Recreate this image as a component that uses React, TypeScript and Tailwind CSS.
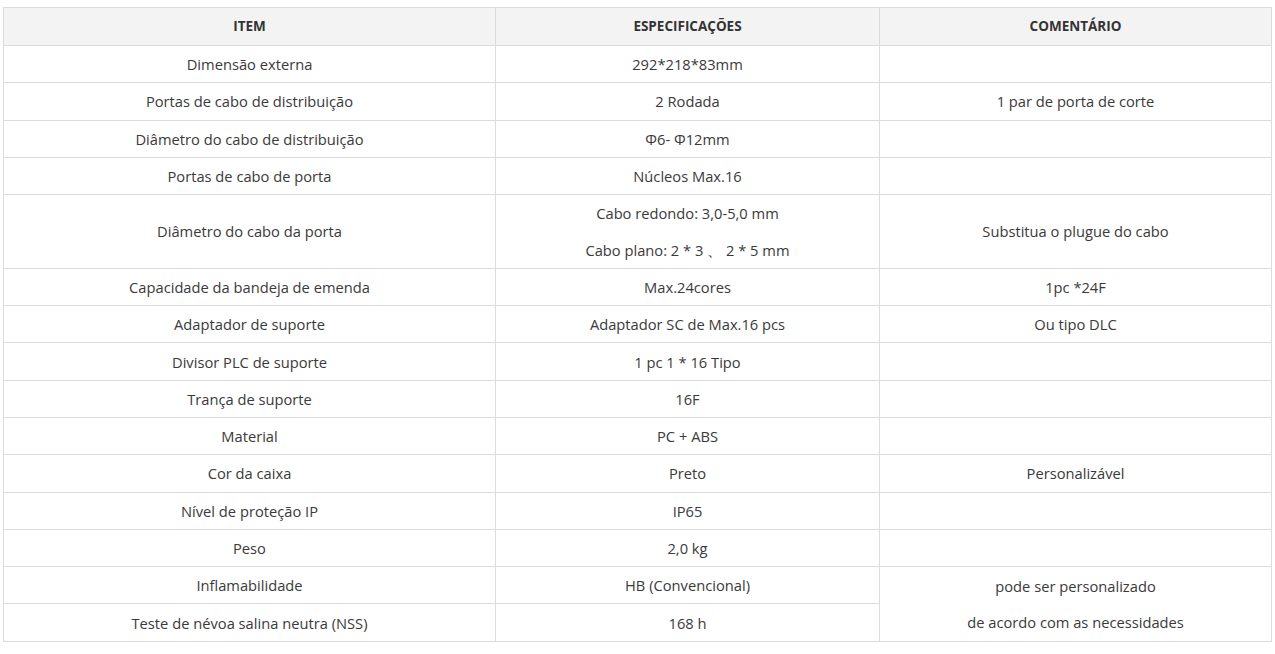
import React from 'react';

interface SpecRow { item: string; spec: string[]; comment?: string[]; span?: number; skip?: boolean; }

const rows: SpecRow[] = [
  { item: 'Dimensão externa', spec: ['292*218*83mm'], comment: [] },
  { item: 'Portas de cabo de distribuição', spec: ['2 Rodada'], comment: ['1 par de porta de corte'] },
  { item: 'Diâmetro do cabo de distribuição', spec: ['Φ6- Φ12mm'], comment: [] },
  { item: 'Portas de cabo de porta', spec: ['Núcleos Max.16'], comment: [] },
  { item: 'Diâmetro do cabo da porta', spec: ['Cabo redondo: 3,0-5,0 mm', 'Cabo plano: 2 * 3 、 2 * 5 mm'], comment: ['Substitua o plugue do cabo'] },
  { item: 'Capacidade da bandeja de emenda', spec: ['Max.24cores'], comment: ['1pc *24F'] },
  { item: 'Adaptador de suporte', spec: ['Adaptador SC de Max.16 pcs'], comment: ['Ou tipo DLC'] },
  { item: 'Divisor PLC de suporte', spec: ['1 pc 1 * 16 Tipo'], comment: [] },
  { item: 'Trança de suporte', spec: ['16F'], comment: [] },
  { item: 'Material', spec: ['PC + ABS'], comment: [] },
  { item: 'Cor da caixa', spec: ['Preto'], comment: ['Personalizável'] },
  { item: 'Nível de proteção IP', spec: ['IP65'], comment: [] },
  { item: 'Peso', spec: ['2,0 kg'], comment: [] },
  { item: 'Inflamabilidade', spec: ['HB (Convencional)'], comment: ['pode ser personalizado', 'de acordo com as necessidades'], span: 2 },
  { item: 'Teste de névoa salina neutra (NSS)', spec: ['168 h'], skip: true },
];

function Lines({ lines }: { lines: string[] }) {
  return (
    <>
      {lines.map((l, i) => (
        <div key={i} className="flex h-[36.3px] items-center justify-center whitespace-pre">{l}</div>
      ))}
    </>
  );
}

export default function App() {
  return (
    <div className="min-h-[654px] bg-white px-[3px] pt-[7px] text-[14.7px] text-[#3a3a3a]" style={{ fontFamily: '"Open Sans", "Liberation Sans", sans-serif' }}>
      <table className="w-[1268px] table-fixed border-collapse text-center">
        <colgroup>
          <col className="w-[492px]" />
          <col className="w-[384px]" />
          <col className="w-[392px]" />
        </colgroup>
        <thead>
          <tr className="bg-[#f3f3f3] text-[13.5px] font-bold text-[#333]">
            <th className="h-[38px] border border-[#dcdcdc] p-0">ITEM</th>
            <th className="border border-[#dcdcdc] p-0">ESPECIFICAÇÕES</th>
            <th className="border border-[#dcdcdc] p-0">COMENTÁRIO</th>
          </tr>
        </thead>
        <tbody>
          {rows.map(r => (
            <tr key={r.item}>
              <td className="border border-[#dcdcdc] p-0">{r.item}</td>
              <td className="border border-[#dcdcdc] p-0"><Lines lines={r.spec} /></td>
              {!r.skip && (
                <td rowSpan={r.span ?? 1} className="border border-[#dcdcdc] p-0">
                  <Lines lines={r.comment ?? []} />
                </td>
              )}
            </tr>
          ))}
        </tbody>
      </table>
    </div>
  );
}
